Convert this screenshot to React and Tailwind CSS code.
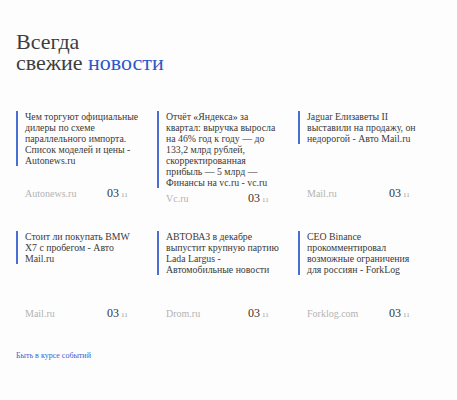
import React from "react";

const news = [
  {
    title:
      "Чем торгуют официальные дилеры по схеме параллельного импорта. Список моделей и цены - Autonews.ru",
    source: "Autonews.ru",
  },
  {
    title:
      "Отчёт «Яндекса» за квартал: выручка выросла на 46% год к году — до 133,2 млрд рублей, скорректированная прибыль — 5 млрд — Финансы на vc.ru - vc.ru",
    source: "Vc.ru",
  },
  {
    title: "Jaguar Елизаветы II выставили на продажу, он недорогой - Авто Mail.ru",
    source: "Mail.ru",
  },
  {
    title: "Стоит ли покупать BMW X7 с пробегом - Авто Mail.ru",
    source: "Mail.ru",
  },
  {
    title:
      "АВТОВАЗ в декабре выпустит крупную партию Lada Largus - Автомобильные новости",
    source: "Drom.ru",
  },
  {
    title:
      "CEO Binance прокомментировал возможные ограничения для россиян - ForkLog",
    source: "Forklog.com",
  },
];

// one news card
const NewsCard = ({ title, source }) => (
  <div className="flex flex-col">
    <div className="min-h-[72px]">
      <p className="w-[126px] border-l-2 border-[#4a6fd3] pl-[7px] text-[9.8px] leading-[11px] text-[#3a3a3a]">
        {title}
      </p>
    </div>
    <div className="flex items-baseline pl-[9px] pt-[1px]">
      <span className="w-[82px] text-[10px] text-[#b3b3b3]">{source}</span>
      <span className="text-[12px] text-[#333]">03</span>
      <span className="ml-[2px] text-[7px] text-[#999]">11</span>
    </div>
  </div>
);

export default function App() {
  return (
    <div className="min-h-screen bg-[#fdfdfd] px-4 pt-[31px] font-['Liberation_Serif','DejaVu_Serif',serif]">
      <h2 className="font-['Liberation_Serif',serif] text-[22px] leading-[21px] text-[#3d3d3d]">
        Всегда
        <br />
        свежие <span className="text-[#2c58c8]">новости</span>
      </h2>

      <div className="mt-[38px] grid w-[423px] grid-cols-3 gap-y-[24px]">
        {news.map((n, i) => (
          <NewsCard key={i} title={n.title} source={n.source} />
        ))}
      </div>

      <a href="#" className="mt-[28px] block text-[8px] text-[#3a62cc]">
        Быть в курсе событий
      </a>
    </div>
  );
}
